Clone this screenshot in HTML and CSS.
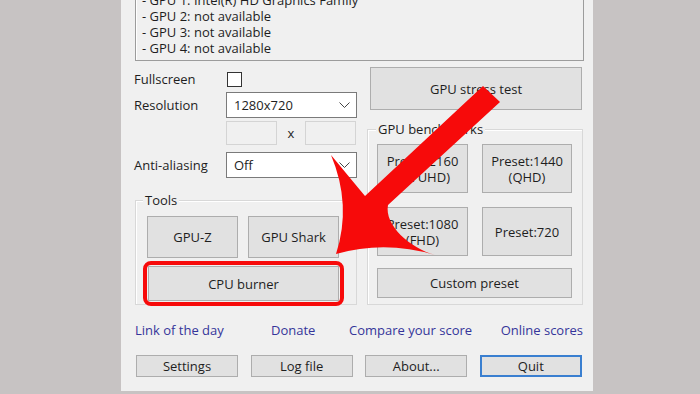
FILE: index.html
```html
<!DOCTYPE html>
<html lang="en">
<head>
    <meta charset="UTF-8">
    <meta name="viewport" content="width=device-width, initial-scale=1.0">
    <title>FurMark</title>
    <link rel="stylesheet" href="styles.css">
</head>
<body>
    <div class="window">
        <div class="gpu-list">
            <div class="gpu-line">- GPU 1: Intel(R) HD Graphics Family</div>
            <div class="gpu-line">- GPU 2: not available</div>
            <div class="gpu-line">- GPU 3: not available</div>
            <div class="gpu-line">- GPU 4: not available</div>
        </div>

        <div class="main">
            <div class="left">
                <div class="row row-check">
                    <span class="label">Fullscreen</span>
                    <span class="checkbox"></span>
                </div>
                <div class="row row-select">
                    <span class="label">Resolution</span>
                    <div class="select">
                        <span>1280x720</span>
                        <svg class="chevron" width="11" height="6" viewBox="0 0 11 6"><path d="M0.5 0.5 L5.5 5.5 L10.5 0.5" fill="none" stroke="#444" stroke-width="1"/></svg>
                    </div>
                </div>
                <div class="row row-size">
                    <span class="label"></span>
                    <div class="size">
                        <span class="field"></span>
                        <span class="times">x</span>
                        <span class="field"></span>
                    </div>
                </div>
                <div class="row row-select row-aa">
                    <span class="label">Anti-aliasing</span>
                    <div class="select">
                        <span>Off</span>
                        <svg class="chevron" width="11" height="6" viewBox="0 0 11 6"><path d="M0.5 0.5 L5.5 5.5 L10.5 0.5" fill="none" stroke="#444" stroke-width="1"/></svg>
                    </div>
                </div>

                <div class="group tools">
                    <div class="group-title">Tools</div>
                    <div class="tool-buttons">
                        <div class="btn tool">GPU-Z</div>
                        <div class="btn tool">GPU Shark</div>
                    </div>
                    <div class="highlight">
                        <div class="btn burner">CPU burner</div>
                    </div>
                </div>
            </div>

            <div class="right">
                <div class="btn stress">GPU stress test</div>
                <div class="group bench">
                    <div class="group-title">GPU benchmarks</div>
                    <div class="presets">
                        <div class="btn preset">Preset:2160<br>(4K UHD)</div>
                        <div class="btn preset">Preset:1440<br>(QHD)</div>
                        <div class="btn preset">Preset:1080<br>(FHD)</div>
                        <div class="btn preset">Preset:720</div>
                    </div>
                    <div class="btn custom">Custom preset</div>
                </div>
            </div>
        </div>

        <div class="links">
            <a class="link">Link of the day</a>
            <a class="link">Donate</a>
            <a class="link">Compare your score</a>
            <a class="link link-last">Online scores</a>
        </div>

        <div class="actions">
            <div class="btn action">Settings</div>
            <div class="btn action">Log file</div>
            <div class="btn action">About...</div>
            <div class="btn action quit">Quit</div>
        </div>
    </div>

    <!-- annotation arrow drawn over the window -->
    <svg class="arrow" width="700" height="394" viewBox="0 0 700 394">
        <path d="M483 86 L500 102 L388 205 C384 225 410 248 435 255 Q385 240 336 254 Q352 205 331 155 Q350 178 365 196 Z" fill="#f70a0a"/>
    </svg>
</body>
</html>
```

FILE: styles.css
```css
body {
    margin: 0;
    width: 700px;
    height: 394px;
    overflow: hidden;
    background: #c7c3c3;
    font-family: "Open Sans", "Noto Sans", Arial, sans-serif;
    font-size: 13px;
    color: #1e1e1e;
    position: relative;
}

.window {
    margin-left: 121px;
    width: 472px;
    box-sizing: border-box;
    padding: 0 10px 14px 13px;
    background: #f0f0f0;
}

.gpu-list {
    margin: -12px -1px 0 1px;
    padding: 3px 6px 4px;
    border: 1px solid #9c9c9c;
    box-shadow: inset 1px 1px 0 #ffffff;
}

.gpu-line {
    height: 16px;
    line-height: 16px;
    white-space: nowrap;
}

.main {
    display: grid;
    grid-template-columns: 224px 216px;
    column-gap: 9px;
    align-items: start;
}

.row {
    display: grid;
    grid-template-columns: 92px 131px;
    align-items: center;
}

.row-check {
    margin-top: 9px;
    height: 15px;
}

.row-select {
    margin-top: 7px;
    height: 26px;
}

.row-size {
    margin-top: 3px;
    height: 24px;
}

.checkbox {
    width: 13px;
    height: 13px;
    margin-left: 1px;
    border: 1px solid #333333;
    background: #ffffff;
}

.select {
    height: 26px;
    box-sizing: border-box;
    border: 1px solid #7a7a7a;
    background: #ffffff;
    display: flex;
    align-items: center;
    justify-content: space-between;
    padding: 0 6px 0 7px;
}

.size {
    display: flex;
    align-items: center;
    height: 24px;
}

.field {
    width: 51px;
    height: 24px;
    box-sizing: border-box;
    border: 1px solid #d4d4d4;
    background: #f0f0f0;
}

.times {
    width: 28px;
    text-align: center;
}

.group {
    box-sizing: border-box;
    border: 1px solid #d8d8d8;
    box-shadow: inset 1px 1px 0 #ffffff;
}

.group-title {
    width: fit-content;
    height: 16px;
    line-height: 16px;
    margin-top: -9px;
    padding: 0 2px;
    background: #f0f0f0;
}

.tools {
    margin: 22px 0 0 1px;
    width: 222px;
    height: 105px;
}

.tools .group-title {
    margin-left: 7px;
}

.tool-buttons {
    display: flex;
    gap: 10px;
    margin: 8px 0 0 11px;
}

.btn {
    box-sizing: border-box;
    border: 1px solid #adadad;
    background: #e1e1e1;
    display: flex;
    align-items: center;
    justify-content: center;
    text-align: center;
    line-height: 16px;
}

.tool {
    width: 91px;
    height: 42px;
}

.highlight {
    margin: 3px 0 0 7px;
    width: 201px;
    box-sizing: border-box;
    border: 4px solid #f70a0a;
    border-radius: 8px;
    padding: 1px;
}

.burner {
    height: 35px;
}

.stress {
    margin: 6px 0 0 3px;
    width: 212px;
    height: 43px;
}

.bench {
    margin-top: 19px;
    width: 216px;
    height: 176px;
}

.bench .group-title {
    margin-left: 8px;
}

.presets {
    display: grid;
    grid-template-columns: 91px 90px;
    grid-auto-rows: 49px;
    gap: 14px;
    margin: 7px 0 0 9px;
}

.custom {
    margin: 12px 0 0 9px;
    width: 195px;
    height: 30px;
}

.links {
    display: grid;
    grid-template-columns: 136px 78px 1fr auto;
    margin: 17px 0 0 1px;
    height: 16px;
    line-height: 16px;
}

.link {
    color: #35359a;
    white-space: nowrap;
}

.link-last {
    justify-self: end;
}

.actions {
    display: grid;
    grid-template-columns: repeat(4, 102px);
    column-gap: 12.6px;
    margin: 17px 0 0 2px;
}

.action {
    height: 22px;
}

.quit {
    border: 2px solid #3a7fd0;
}

.arrow {
    position: absolute;
    top: 0;
    left: 0;
    pointer-events: none;
}
```
